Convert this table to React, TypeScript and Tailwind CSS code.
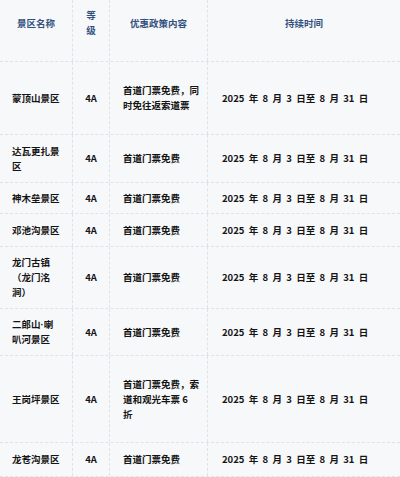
import React from "react";

const rows: { name: React.ReactNode; policy: React.ReactNode; h: number }[] = [
  { name: "蒙顶山景区", policy: <>首道门票免费，同<br />时免往返索道票</>, h: 73 },
  { name: <>达瓦更扎景<br />区</>, policy: "首道门票免费", h: 48 },
  { name: "神木垒景区", policy: "首道门票免费", h: 31 },
  { name: "邓池沟景区", policy: "首道门票免费", h: 33 },
  { name: <>龙门古镇<br />（龙门洺<br />涧）</>, policy: "首道门票免费", h: 62 },
  {
    name: (
      <>
        二郎山<span style={{ fontFamily: '"Liberation Sans", sans-serif' }}>·</span>喇<br />叭河景区
      </>
    ),
    policy: "首道门票免费",
    h: 47,
  },
  { name: "王岗坪景区", policy: <>首道门票免费，索<br />道和观光车票 6<br />折</>, h: 87 },
  { name: "龙苍沟景区", policy: "首道门票免费", h: 34 },
];

const cell = "border-r border-dashed border-[#dfe3e8] flex items-center";

export default function App() {
  return (
    <div
      className="w-[400px] h-[477px] overflow-hidden bg-[#f7f8fa] text-[9.5px] font-bold leading-[15px]"
      style={{ fontFamily: '"Noto Sans CJK SC", "Noto Sans", sans-serif' }}
    >
      <div className="grid grid-cols-[73px_37px_98px_192px] h-[62px] border-b border-dashed border-[#dfe3e8] text-[#34527f]">
        <div className={`${cell} justify-center items-start pt-[16px]`}>景区名称</div>
        <div className={`${cell} justify-center items-start pt-[8px] text-center`}>等<br />级</div>
        <div className={`${cell} justify-center items-start pt-[16px]`}>优惠政策内容</div>
        <div className="flex justify-center items-start pt-[16px]">持续时间</div>
      </div>
      {rows.map((r, i) => (
        <div
          key={i}
          className="grid grid-cols-[73px_37px_98px_192px] border-b border-dashed border-[#dfe3e8] text-[#141414]"
          style={{ height: r.h }}
        >
          <div className={`${cell} pl-3 pr-2`}>
            <span>{r.name}</span>
          </div>
          <div className={`${cell} justify-center`}>4A</div>
          <div className={`${cell} pl-[13px] pr-2`}>
            <span>{r.policy}</span>
          </div>
          <div className="flex items-center pl-[14px] whitespace-pre">
            2025  年  8  月  3  日至  8  月  31  日
          </div>
        </div>
      ))}
    </div>
  );
}
